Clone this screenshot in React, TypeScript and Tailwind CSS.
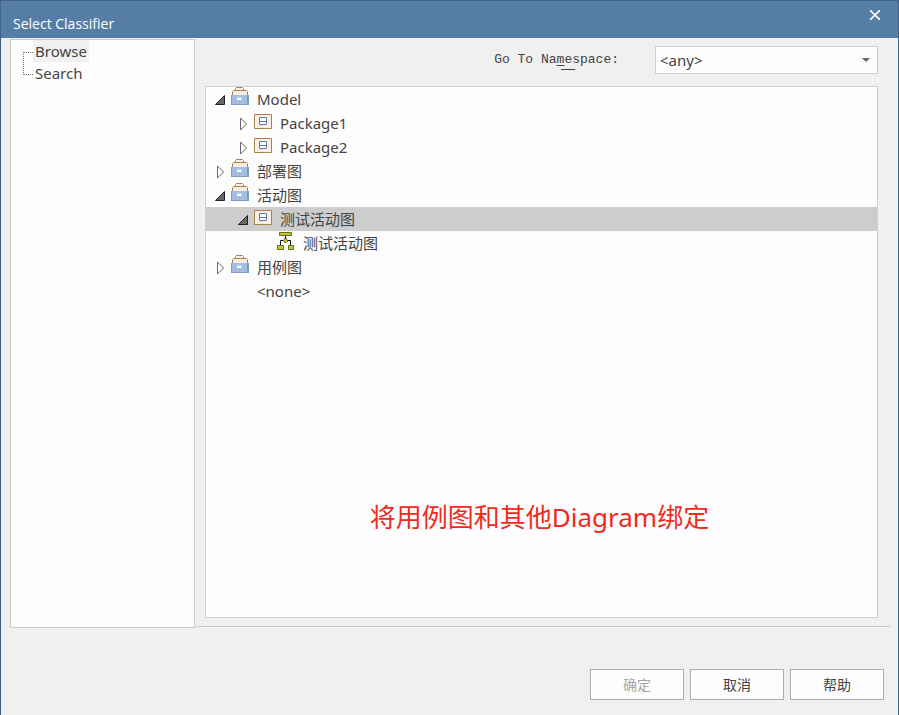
import { useState } from "react";

type Icon = "model" | "package" | "diagram" | "none";
type Arrow = "open" | "closed" | "leaf";
type Row = { label: string; level: 0 | 1 | 2; icon: Icon; arrow: Arrow };

const rows: Row[] = [
  { label: "Model", level: 0, icon: "model", arrow: "open" },
  { label: "Package1", level: 1, icon: "package", arrow: "closed" },
  { label: "Package2", level: 1, icon: "package", arrow: "closed" },
  { label: "部署图", level: 0, icon: "model", arrow: "closed" },
  { label: "活动图", level: 0, icon: "model", arrow: "open" },
  { label: "测试活动图", level: 1, icon: "package", arrow: "open" },
  { label: "测试活动图", level: 2, icon: "diagram", arrow: "leaf" },
  { label: "用例图", level: 0, icon: "model", arrow: "closed" },
  { label: "<none>", level: 0, icon: "none", arrow: "leaf" },
];

const indent = { 0: "pl-2", 1: "pl-[31px]", 2: "pl-[54px]" };

function ArrowGlyph({ kind }: { kind: Arrow }) {
  return (
    <svg width="12" height="14" viewBox="0 0 12 14" aria-hidden="true">
      {kind === "open" && (
        <path d="M10.5 2.5v9h-9z" fill="#686868" stroke="#222" />
      )}
      {kind === "closed" && (
        <path d="M3.5 1v12L9.5 7z" fill="#fdfdfd" stroke="#666" />
      )}
    </svg>
  );
}

function NodeIcon({ kind }: { kind: Icon }) {
  if (kind === "model")
    return (
      <svg width="18" height="18" viewBox="0 0 18 18" aria-hidden="true" className="mb-[6px]">
        <path d="M4.5 3.5v-2l1-1h6l1 1v2" fill="#fdf3ea" stroke="#a9834f" />
        <path d="M1.5 8V4.5l1-1h13l1 1V8" fill="#fdeee2" stroke="#a9834f" />
        <path d="M0 8h18v10H0z" fill="#7c9dc0" />
        <path d="M1 8h15v9H1z" fill="#a3bfdd" />
        <path d="M6 10h5v3H6z" fill="#c9dbec" />
        <path d="M6 11h4v2H6z" fill="#fff" />
      </svg>
    );
  if (kind === "package")
    return (
      <svg width="18" height="16" viewBox="0 0 18 16" aria-hidden="true" className="mb-[2px]">
        <path d="M.5.5h17v14H.5z" fill="#fdeee4" stroke="#a9834f" />
        <path d="M5.5 3.5h7v7h-7zM5.5 7.5h7" fill="#fff" stroke="#6076b0" />
      </svg>
    );
  if (kind === "diagram")
    return (
      <svg width="18" height="20" viewBox="0 0 18 20" aria-hidden="true" className="mb-1">
        <path d="M8.5 4v4M3.5 14v-4.5h10V14" fill="none" stroke="#111" />
        <path d="M2.5 1.5h12v3h-12zM.5 14.5h6v4h-6zM11.5 14.5h5v4h-5z" fill="#c3c92b" stroke="#6b6a22" />
        <path d="M8.5 7l2.5 2.5L8.5 12 6 9.5z" fill="#c3c92b" stroke="#111" strokeDasharray="2 1" />
      </svg>
    );
  return null;
}

export default function App() {
  const [selected, setSelected] = useState(5);
  return (
    <div className="flex min-h-screen flex-col border-x border-t border-[#41638a] bg-[#f0f0f0] font-['Noto_Sans','Noto_Sans_CJK_SC',sans-serif] text-[15px] text-[#444]">
      <header className="flex h-[37px] shrink-0 justify-between bg-[#567da6] pl-3 text-white">
        <h1 className="pt-3 font-['Open_Sans','Noto_Sans',sans-serif] text-sm leading-[22px]">
          Select Classifier
        </h1>
        <button type="button" aria-label="Close" className="flex h-[27px] w-[46px] items-center justify-center">
          <svg width="10" height="10" viewBox="0 0 10 10" aria-hidden="true">
            <path d="M0 0l10 10M10 0L0 10" stroke="#fff" strokeWidth="1.6" />
          </svg>
        </button>
      </header>

      <main className="mx-2 flex flex-1 border-b border-[#cacaca]">
        <nav aria-label="Mode" className="-mb-[2px] ml-px mt-px w-[185px] shrink-0 border border-[#cacaca] bg-[#fdfdfd]">
          <div className="flex pl-3">
            <div className="mt-3 h-[23px] w-[10px] border-y border-l border-dotted border-[#777]" />
            <ul className="leading-[22px]">
              <li><button type="button" className="bg-[#f0f0f0] px-[2px]">Browse</button></li>
              <li><button type="button" className="px-[2px]">Search</button></li>
            </ul>
          </div>
        </nav>

        <section className="mb-2 ml-[10px] mr-3 mt-2 flex flex-1 flex-col gap-3">
          <div className="flex h-7 items-center justify-end">
            <label
              htmlFor="namespace"
              className="relative mr-9 font-['Liberation_Mono',monospace] text-[13px] leading-5"
            >
              Go To Na<span className="underline underline-offset-2">m</span>espace:
              <span className="absolute bottom-0 left-[67px] h-px w-[14px] bg-[#444]" />
            </label>
            <div className="relative w-1/3 min-w-[160px] max-w-[223px]">
              <select
                id="namespace"
                className="block h-7 w-full appearance-none border border-[#d0d0d0] bg-[#fdfdfd] pl-1 text-[15px]"
              >
                <option>&lt;any&gt;</option>
              </select>
              <svg width="8" height="4" viewBox="0 0 8 4" aria-hidden="true" className="pointer-events-none absolute right-2 top-3">
                <path d="M0 0h8L4 4z" fill="#666" />
              </svg>
            </div>
          </div>

          <div className="flex flex-1 flex-col border border-[#d0d0d0] bg-[#fdfdfd]">
            <ul>
              {rows.map((row, i) => (
                <li key={i}>
                  <button
                    type="button"
                    onClick={() => setSelected(i)}
                    className={`flex h-6 w-full items-center text-left ${indent[row.level]} ${
                      selected === i ? "bg-[#cdcdcd]" : ""
                    }`}
                  >
                    <span className="w-[17px] pt-[2px]"><ArrowGlyph kind={row.arrow} /></span>
                    <span className="w-[26px]"><NodeIcon kind={row.icon} /></span>
                    <span>{row.label}</span>
                  </button>
                </li>
              ))}
            </ul>
            <p className="mb-20 mt-auto pr-1 text-center text-[26px] leading-10 text-[#f02a1d]">
              将用例图和其他Diagram绑定
            </p>
          </div>
        </section>
      </main>

      <footer className="flex h-[88px] shrink-0 justify-end gap-[6px] pr-[14px] pt-[42px] font-['Noto_Sans_CJK_SC',sans-serif] text-sm">
        <button type="button" disabled className="h-[31px] w-[94px] border border-[#adadad] bg-[#fdfdfd] pb-[2px] text-[#a6a6a6]">确定</button>
        <button type="button" className="h-[31px] w-[94px] border border-[#adadad] bg-[#fdfdfd] pb-[2px]">取消</button>
        <button type="button" className="h-[31px] w-[94px] border border-[#adadad] bg-[#fdfdfd] pb-[2px]">帮助</button>
      </footer>
    </div>
  );
}
